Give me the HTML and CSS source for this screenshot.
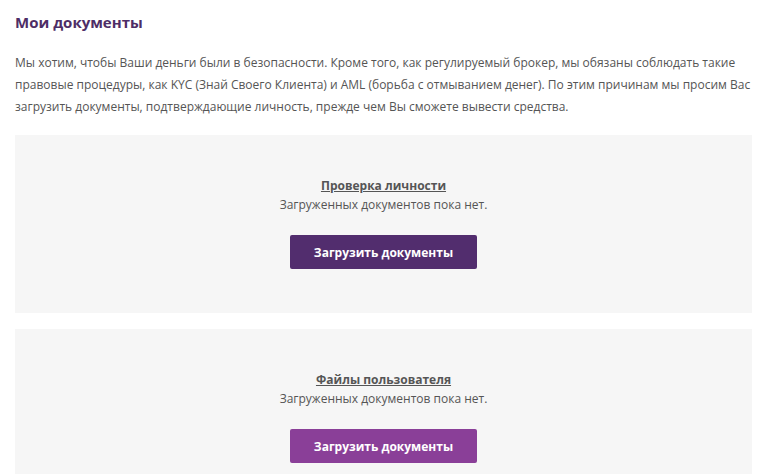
FILE: index.html
```html
<!DOCTYPE html>
<html lang="ru">
<head>
    <meta charset="UTF-8">
    <meta name="viewport" content="width=device-width, initial-scale=1.0">
    <title>Мои документы</title>
    <link rel="stylesheet" href="styles.css">
</head>
<body>
    <div class="page">
        <h2 class="title">Мои документы</h2>

        <p class="intro">Мы хотим, чтобы Ваши деньги были в безопасности. Кроме того, как регулируемый брокер, мы обязаны соблюдать такие правовые процедуры, как KYC (Знай Своего Клиента) и AML (борьба с отмыванием денег). По этим причинам мы просим Вас загрузить документы, подтверждающие личность, прежде чем Вы сможете вывести средства.</p>

        <!-- Identity check -->
        <div class="doc-box">
            <a href="#" class="doc-title">Проверка личности</a>
            <div class="doc-empty">Загруженных документов пока нет.</div>
            <button class="upload-btn">Загрузить документы</button>
        </div>

        <!-- User files -->
        <div class="doc-box">
            <a href="#" class="doc-title">Файлы пользователя</a>
            <div class="doc-empty">Загруженных документов пока нет.</div>
            <button class="upload-btn light">Загрузить документы</button>
        </div>
    </div>
</body>
</html>
```

FILE: styles.css
```css
body {
    font-family: 'Open Sans', 'Noto Sans', sans-serif;
    margin: 0;
    padding: 0;
    background: #fff;
    color: #555;
}

.page {
    padding: 0 18px 0 15px;
}

.title {
    margin: 0;
    padding-top: 12px;
    font-size: 15px;
    line-height: 20px;
    font-weight: bold;
    color: #4e2d66;
}

.intro {
    margin: 20px 0 17px;
    font-size: 12px;
    line-height: 22px;
    color: #555;
}

.doc-box {
    background: #f6f6f6;
    height: 178px;
    margin-bottom: 16px;
    box-sizing: border-box;
    padding-top: 41px;
    display: flex;
    flex-direction: column;
    align-items: center;
}

.doc-title {
    font-size: 12px;
    line-height: 19px;
    font-weight: bold;
    color: #555;
    text-decoration: underline;
}

.doc-empty {
    font-size: 12px;
    line-height: 19px;
    color: #555;
}

.upload-btn {
    margin-top: 21px;
    width: 187px;
    height: 34px;
    border: none;
    border-radius: 2px;
    background: #522d6e;
    color: white;
    font-family: 'Open Sans', sans-serif;
    font-size: 12px;
    font-weight: bold;
    cursor: pointer;
}

.upload-btn.light {
    background: #8a3f98;
}
```
